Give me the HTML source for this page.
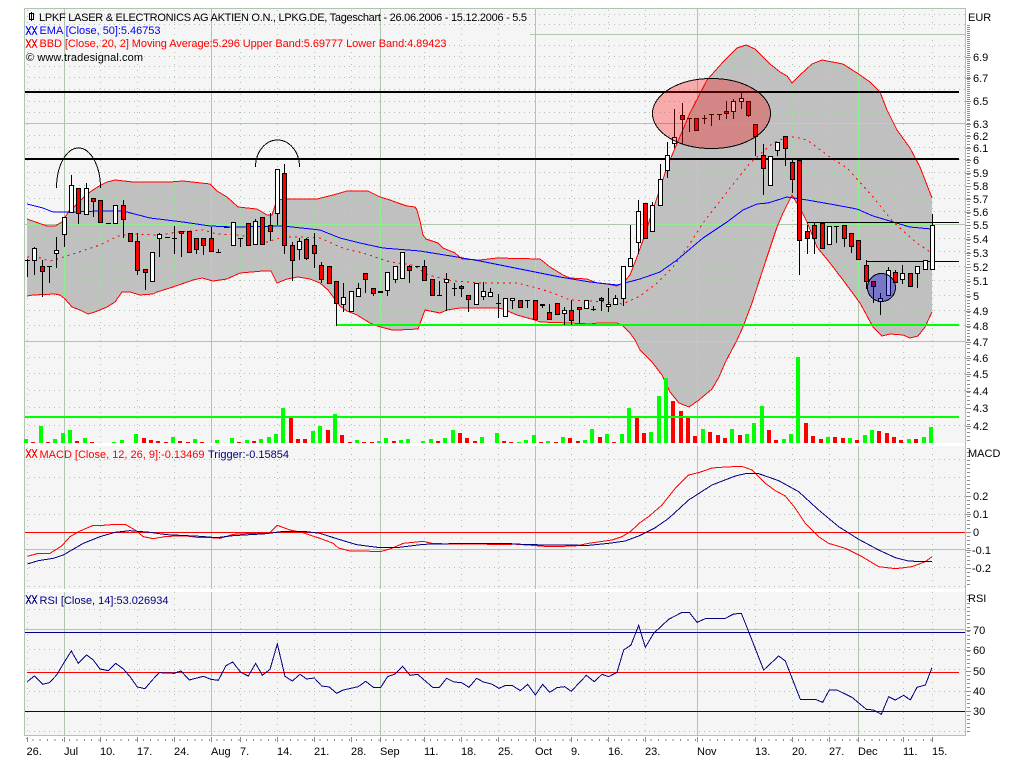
<!DOCTYPE html>
<html><head><meta charset="utf-8"><title>LPKF Chart</title>
<style>html,body{margin:0;padding:0;background:#fff}svg{display:block}
text{font-family:"Liberation Sans",Tahoma,sans-serif;font-size:11px}</style></head><body>
<svg width="1024" height="768" viewBox="0 0 1024 768" shape-rendering="crispEdges" xmlns="http://www.w3.org/2000/svg">
<defs>
<clipPath id="b"><path d="M27 219L47 226 55 226 62 222 69 211 71 210 78 203 86 195 93 190 101 185 107 182 115 180 133 182 170 182 183 181 210 184 217 191 227 197 238 207 257 209 267 215 272 215 277 200 287 199 317 199 333 195 340 193 347 191 368 191 380 197 390 200 398 203 407 206 415 207 417 210 420 221 423 235 426 239 438 243 443 248 455 253 462 259 480 260 497 258 540 259 550 267 563 275 570 278 587 279 597 283 607 284 617 286 623 283 630 275 637 257 642 243 653 210 667 167 690 113 707 80 723 62 737 48 746 45 755 49 770 64 780 72 787 76 792 83 800 75 812 64 822 60 843 64 857 73 870 82 880 92 887 110 897 130 910 148 920 167 932 198V312L925 327 918 336 910 338 903 335 890 334 882 336 873 327 860 303 843 280 830 263 817 247 807 222 802 212 792 195 783 213 777 227 767 257 752 303 743 327 737 340 725 363 719 377 712 389 699 400 689 407 679 403 670 392 662 375 652 362 640 350 635 340 630 333 623 326 617 323 598 323 590 324 570 323 540 322 535 320 517 315 503 309 497 308 488 308 477 308 460 308 447 310 440 313 425 310 418 329 398 330 392 330 377 326 370 323 357 315 347 311 340 306 328 290 320 283 310 279 298 277 287 279 277 283 271 271 263 271 240 273 227 279 213 281 202 278 193 280 173 287 157 292 153 294 140 295 130 292 122 292 115 302 107 307 95 312 88 314 80 310 72 307 65 299 60 295 55 294 33 295 27 296Z"/></clipPath>
<g id="g">
<path d="M29 14.5H965M29 24.5H965M29 45.5H965M29 56.5H965M29 66.5H965M29 77.5H965M29 89.5H965M29 101.5H965M29 112.5H965M29 135.5H965M29 147.5H965M29 159.5H965M29 172.5H965M29 185.5H965M29 198.5H965M29 211.5H965M29 238.5H965M29 251.5H965M29 266.5H965M29 280.5H965M29 295.5H965M29 310.5H965M29 325.5H965M29 357.5H965M29 373.5H965M29 390.5H965M29 407.5H965M29 425.5H965M29 459.5H965M29 477.5H965M29 496.5H965M29 514.5H965M29 567.5H965M29 586.5H965M29 609.5H965M29 649.5H965M29 669.5H965M29 691.5H965M29 731.5H965" stroke-dasharray="1 4" fill="none"/>
<path d="M27.5 10V735M100.5 10V735M137.5 10V735M174.5 10V735M240.5 10V735M277.5 10V735M314.5 10V735M351.5 10V735M424.5 10V735M461.5 10V735M498.5 10V735M571.5 10V735M608.5 10V735M645.5 10V735M755.5 10V735M792.5 10V735M829.5 10V735M903.5 10V735M932.5 10V735" stroke-dasharray="1 5" fill="none"/>
<path d="M530 34.5H965M25 123.5H965M25 224.5H965M25 341.5H965M25 549.5H965M25 629.5H965M64.5 9V735M211.5 9V735M380.5 9V735M535.5 9V735M697.5 9V735M858.5 9V735" fill="none"/>
</g>
</defs>
<rect x="25" y="9" width="940" height="726" fill="#f5f5f5"/>
<use href="#g" stroke="#afc5af"/>
<!-- band -->
<path d="M27 219L47 226 55 226 62 222 69 211 71 210 78 203 86 195 93 190 101 185 107 182 115 180 133 182 170 182 183 181 210 184 217 191 227 197 238 207 257 209 267 215 272 215 277 200 287 199 317 199 333 195 340 193 347 191 368 191 380 197 390 200 398 203 407 206 415 207 417 210 420 221 423 235 426 239 438 243 443 248 455 253 462 259 480 260 497 258 540 259 550 267 563 275 570 278 587 279 597 283 607 284 617 286 623 283 630 275 637 257 642 243 653 210 667 167 690 113 707 80 723 62 737 48 746 45 755 49 770 64 780 72 787 76 792 83 800 75 812 64 822 60 843 64 857 73 870 82 880 92 887 110 897 130 910 148 920 167 932 198V312L925 327 918 336 910 338 903 335 890 334 882 336 873 327 860 303 843 280 830 263 817 247 807 222 802 212 792 195 783 213 777 227 767 257 752 303 743 327 737 340 725 363 719 377 712 389 699 400 689 407 679 403 670 392 662 375 652 362 640 350 635 340 630 333 623 326 617 323 598 323 590 324 570 323 540 322 535 320 517 315 503 309 497 308 488 308 477 308 460 308 447 310 440 313 425 310 418 329 398 330 392 330 377 326 370 323 357 315 347 311 340 306 328 290 320 283 310 279 298 277 287 279 277 283 271 271 263 271 240 273 227 279 213 281 202 278 193 280 173 287 157 292 153 294 140 295 130 292 122 292 115 302 107 307 95 312 88 314 80 310 72 307 65 299 60 295 55 294 33 295 27 296Z" fill="#c0c0c0"/>
<g clip-path="url(#b)"><use href="#g" stroke="#90ee90"/></g>
<rect x="25" y="443" width="940" height="3" fill="#fff"/>
<rect x="25" y="589" width="940" height="3" fill="#fff"/>
<path d="M25 8.5H966M24.5 8V736M965.5 8V736M24 735.5H966" stroke="#afc5af" fill="none"/>
<!-- band lines -->
<g fill="none" stroke="#f00">
<path d="M27 219L47 226 55 226 62 222 69 211 71 210 78 203 86 195 93 190 101 185 107 182 115 180 133 182 170 182 183 181 210 184 217 191 227 197 238 207 257 209 267 215 272 215 277 200 287 199 317 199 333 195 340 193 347 191 368 191 380 197 390 200 398 203 407 206 415 207 417 210 420 221 423 235 426 239 438 243 443 248 455 253 462 259 480 260 497 258 540 259 550 267 563 275 570 278 587 279 597 283 607 284 617 286 623 283 630 275 637 257 642 243 653 210 667 167 690 113 707 80 723 62 737 48 746 45 755 49 770 64 780 72 787 76 792 83 800 75 812 64 822 60 843 64 857 73 870 82 880 92 887 110 897 130 910 148 920 167 932 198"/>
<path d="M932 312L925 327 918 336 910 338 903 335 890 334 882 336 873 327 860 303 843 280 830 263 817 247 807 222 802 212 792 195 783 213 777 227 767 257 752 303 743 327 737 340 725 363 719 377 712 389 699 400 689 407 679 403 670 392 662 375 652 362 640 350 635 340 630 333 623 326 617 323 598 323 590 324 570 323 540 322 535 320 517 315 503 309 497 308 488 308 477 308 460 308 447 310 440 313 425 310 418 329 398 330 392 330 377 326 370 323 357 315 347 311 340 306 328 290 320 283 310 279 298 277 287 279 277 283 271 271 263 271 240 273 227 279 213 281 202 278 193 280 173 287 157 292 153 294 140 295 130 292 122 292 115 302 107 307 95 312 88 314 80 310 72 307 65 299 60 295 55 294 33 295 27 296"/>
<path stroke-dasharray="2 4" d="M27 257L37 257 43 259 50 261 57 259 70 255 100 245 118 236 133 234 160 235 177 232 203 230 217 234 240 235 267 242 283 237 300 237 320 238 340 247 350 250 363 253 390 262 413 265 428 275 453 281 480 283 517 283 537 288 553 293 570 300 590 301 607 302 623 304 640 296 657 283 673 267 687 248 703 223 727 192 750 163 773 143 787 137 795 137 807 140 830 157 847 168 873 197 893 222 917 243 930 252"/>
</g>
<path fill="none" stroke="#00f" d="M27 204L43 208 53 212 70 212 100 211 123 211 150 218 183 222 210 226 233 227 283 226 320 230 340 238 360 243 383 248 420 251 457 257 480 261 520 269 560 277 590 282 617 285 640 279 660 272 677 260 703 238 727 222 743 210 757 204 768 203 787 197 807 200 830 204 857 209 873 216 893 222 910 227 931 229"/>
<!-- volume -->
<path fill="#0f0" d="M24 439h4V443h-4zM39 426h4V443h-4zM53 439h4V443h-4zM61 433h4V443h-4zM68 430h4V443h-4zM83 438h4V443h-4zM112 442h4V443h-4zM120 440h4V443h-4zM134 434h4V443h-4zM171 437h4V443h-4zM193 439h4V443h-4zM215 440h4V443h-4zM230 438h4V443h-4zM245 440h4V443h-4zM259 439h4V443h-4zM267 437h4V443h-4zM274 434h4V443h-4zM281 408h4V443h-4zM311 431h4V443h-4zM318 426h4V443h-4zM333 414h4V443h-4zM355 440h4V443h-4zM377 441h4V443h-4zM384 438h4V443h-4zM399 440h4V443h-4zM406 439h4V443h-4zM421 441h4V443h-4zM429 439h4V443h-4zM443 438h4V443h-4zM451 430h4V443h-4zM480 437h4V443h-4zM495 433h4V443h-4zM517 442h4V443h-4zM524 440h4V443h-4zM532 435h4V443h-4zM546 441h4V443h-4zM561 437h4V443h-4zM583 440h4V443h-4zM590 429h4V443h-4zM605 434h4V443h-4zM620 434h4V443h-4zM627 408h4V443h-4zM649 432h4V443h-4zM657 396h4V443h-4zM664 378h4V443h-4zM701 429h4V443h-4zM730 429h4V443h-4zM745 434h4V443h-4zM752 423h4V443h-4zM760 406h4V443h-4zM782 439h4V443h-4zM789 434h4V443h-4zM796 357h4V443h-4zM826 437h4V443h-4zM848 438h4V443h-4zM863 435h4V443h-4zM870 430h4V443h-4zM907 439h4V443h-4zM922 437h4V443h-4zM929 427h4V443h-4z"/>
<path fill="#f00" d="M31 442h4V443h-4zM46 442h4V443h-4zM75 441h4V443h-4zM90 442h4V443h-4zM142 438h4V443h-4zM149 440h4V443h-4zM156 441h4V443h-4zM164 442h4V443h-4zM178 441h4V443h-4zM186 442h4V443h-4zM200 442h4V443h-4zM237 442h4V443h-4zM252 441h4V443h-4zM289 418h4V443h-4zM296 439h4V443h-4zM303 439h4V443h-4zM326 430h4V443h-4zM340 435h4V443h-4zM348 442h4V443h-4zM362 442h4V443h-4zM370 442h4V443h-4zM392 441h4V443h-4zM436 441h4V443h-4zM458 433h4V443h-4zM465 438h4V443h-4zM473 441h4V443h-4zM502 441h4V443h-4zM509 442h4V443h-4zM539 442h4V443h-4zM554 442h4V443h-4zM568 438h4V443h-4zM576 441h4V443h-4zM598 437h4V443h-4zM612 442h4V443h-4zM635 418h4V443h-4zM642 433h4V443h-4zM671 401h4V443h-4zM679 411h4V443h-4zM686 418h4V443h-4zM693 436h4V443h-4zM708 432h4V443h-4zM716 435h4V443h-4zM723 438h4V443h-4zM738 435h4V443h-4zM767 430h4V443h-4zM774 440h4V443h-4zM804 423h4V443h-4zM811 436h4V443h-4zM819 439h4V443h-4zM833 437h4V443h-4zM841 438h4V443h-4zM855 440h4V443h-4zM877 431h4V443h-4zM885 433h4V443h-4zM892 437h4V443h-4zM899 440h4V443h-4zM914 439h4V443h-4z"/>
<!-- horizontal studies -->
<rect x="25" y="91" width="934" height="2" fill="#000"/>
<rect x="25" y="158" width="934" height="2" fill="#000"/>
<rect x="807" y="222" width="152" height="1" fill="#000"/>
<rect x="866" y="261" width="93" height="1" fill="#000"/>
<rect x="336" y="324" width="623" height="2" fill="#0f0"/>
<rect x="25" y="416" width="934" height="2" fill="#0f0"/>
<!-- candle wicks -->
<path fill="none" stroke="#000" d="M27.5 259V277M34.5 247V275M42.5 260V297M49.5 266V283M56.5 237V268M64.5 217V247M71.5 175V213M78.5 188V224M86.5 183V215M93.5 198V217M123.5 200V238M137.5 233V275M145.5 269V290M159.5 233V257M174.5 226V254M181.5 231V257M196.5 238V254M203.5 238V255M211.5 227V252M218.5 249V253M240.5 238V247M255.5 219V245M270.5 213V241M277.5 169V225M284.5 164V254M292.5 242V281M299.5 238V260M306.5 238V260M314.5 233V268M321.5 262V283M336.5 281V326M343.5 283V312M358.5 283V297M365.5 273V293M373.5 288V296M387.5 272V296M395.5 266V283M409.5 265V283M424.5 260V281M439.5 281V296M446.5 273V311M454.5 283V296M461.5 285V297M468.5 295V312M483.5 282V300M490.5 288V297M498.5 294V318M512.5 298V309M527.5 300V308M542.5 304V308M549.5 304V320M564.5 307V325M571.5 300V325M579.5 307V323M593.5 306V311M601.5 297V311M608.5 288V312M615.5 295V305M623.5 266V306M630.5 225V259M638.5 200V254M652.5 202V232M660.5 164V206M667.5 142V178M674.5 109V148M682.5 103V144M689.5 118V132M704.5 115V124M711.5 114V126M719.5 114V120M726.5 101V119M733.5 99V119M741.5 93V109M748.5 101V117M755.5 124V156M763.5 144V195M777.5 142V156M785.5 136V166M792.5 160V193M799.5 160V275M807.5 225V254M814.5 223V254M836.5 226V243M844.5 225V247M851.5 233V253M866.5 260V289M873.5 281V303M880.5 293V315M888.5 267V296M895.5 270V283M902.5 265V284M917.5 266V288M932.5 214V270"/>
<!-- doji -->
<path fill="none" stroke="#000" d="M25 260.5h5M47 266.5h5M106 223.5h5M165 237.5h5M172 238.5h5M216 252.5h5M224 227.5h5M238 238.5h5M415 266.5h5M378 291.5h5M378 292.5h5M437 295.5h5M452 288.5h5M496 303.5h5M525 300.5h5M540 304.5h5M540 305.5h5M591 309.5h5M687 118.5h5M702 118.5h5M709 114.5h5M717 114.5h5M834 226.5h5"/>
<!-- red bodies -->
<path fill="#f00" stroke="#000" d="M40.5 266.5h4V271.5h-4zM76.5 188.5h4V213.5h-4zM91.5 198.5h4V201.5h-4zM98.5 200.5h4V222.5h-4zM121.5 205.5h4V219.5h-4zM128.5 233.5h4V241.5h-4zM135.5 241.5h4V270.5h-4zM143.5 269.5h4V272.5h-4zM179.5 231.5h4V233.5h-4zM187.5 231.5h4V252.5h-4zM194.5 238.5h4V249.5h-4zM201.5 238.5h4V245.5h-4zM209.5 238.5h4V251.5h-4zM246.5 223.5h4V245.5h-4zM260.5 217.5h4V244.5h-4zM268.5 225.5h4V231.5h-4zM282.5 173.5h4V245.5h-4zM290.5 245.5h4V260.5h-4zM304.5 239.5h4V258.5h-4zM312.5 245.5h4V253.5h-4zM319.5 265.5h4V279.5h-4zM327.5 266.5h4V283.5h-4zM334.5 281.5h4V303.5h-4zM363.5 273.5h4V279.5h-4zM371.5 288.5h4V293.5h-4zM407.5 266.5h4V270.5h-4zM422.5 266.5h4V280.5h-4zM430.5 279.5h4V295.5h-4zM459.5 286.5h4V288.5h-4zM466.5 295.5h4V299.5h-4zM518.5 300.5h4V307.5h-4zM533.5 300.5h4V319.5h-4zM547.5 312.5h4V319.5h-4zM555.5 303.5h4V314.5h-4zM569.5 310.5h4V320.5h-4zM577.5 307.5h4V309.5h-4zM599.5 298.5h4V300.5h-4zM643.5 203.5h4V238.5h-4zM680.5 115.5h4V119.5h-4zM694.5 118.5h4V130.5h-4zM724.5 111.5h4V113.5h-4zM746.5 101.5h4V115.5h-4zM753.5 124.5h4V136.5h-4zM761.5 155.5h4V168.5h-4zM783.5 136.5h4V148.5h-4zM790.5 162.5h4V179.5h-4zM797.5 160.5h4V240.5h-4zM805.5 231.5h4V238.5h-4zM812.5 225.5h4V238.5h-4zM820.5 223.5h4V248.5h-4zM842.5 225.5h4V238.5h-4zM849.5 233.5h4V246.5h-4zM856.5 240.5h4V259.5h-4zM864.5 265.5h4V281.5h-4zM871.5 281.5h4V286.5h-4zM893.5 272.5h4V282.5h-4zM908.5 273.5h4V286.5h-4z"/>
<!-- white bodies -->
<path fill="#fff" stroke="#000" d="M32.5 248.5h4V260.5h-4zM54.5 250.5h4V253.5h-4zM62.5 217.5h4V234.5h-4zM69.5 185.5h4V212.5h-4zM84.5 188.5h4V214.5h-4zM113.5 205.5h4V223.5h-4zM150.5 252.5h4V281.5h-4zM157.5 234.5h4V238.5h-4zM231.5 222.5h4V245.5h-4zM253.5 221.5h4V244.5h-4zM275.5 169.5h4V213.5h-4zM297.5 241.5h4V249.5h-4zM341.5 297.5h4V304.5h-4zM349.5 291.5h4V311.5h-4zM356.5 288.5h4V296.5h-4zM385.5 272.5h4V290.5h-4zM393.5 266.5h4V279.5h-4zM400.5 252.5h4V278.5h-4zM444.5 279.5h4V282.5h-4zM474.5 283.5h4V304.5h-4zM481.5 291.5h4V296.5h-4zM488.5 292.5h4V296.5h-4zM503.5 298.5h4V316.5h-4zM510.5 298.5h4V300.5h-4zM562.5 310.5h4V313.5h-4zM584.5 300.5h4V308.5h-4zM606.5 304.5h4V306.5h-4zM613.5 298.5h4V304.5h-4zM621.5 266.5h4V298.5h-4zM628.5 258.5h4V266.5h-4zM636.5 211.5h4V242.5h-4zM650.5 205.5h4V231.5h-4zM658.5 179.5h4V205.5h-4zM665.5 155.5h4V170.5h-4zM672.5 137.5h4V143.5h-4zM731.5 101.5h4V111.5h-4zM739.5 98.5h4V101.5h-4zM768.5 156.5h4V185.5h-4zM775.5 142.5h4V150.5h-4zM827.5 226.5h4V244.5h-4zM878.5 298.5h4V301.5h-4zM886.5 270.5h4V295.5h-4zM900.5 273.5h4V279.5h-4zM915.5 266.5h4V273.5h-4zM923.5 260.5h4V269.5h-4zM930.5 225.5h4V269.5h-4z"/>
<!-- annotations -->
<ellipse cx="711.5" cy="113.5" rx="59" ry="35" fill="#f00" fill-opacity=".3" stroke="#000"/>
<circle cx="881.5" cy="287.5" r="14" fill="#0000c8" fill-opacity=".38" stroke="#000"/>
<path fill="none" stroke="#000" d="M56.5 188A22 40 0 0 1 100.5 188M255.5 167A22 27 0 0 1 299.5 167"/>
<!-- MACD -->
<path fill="none" stroke="#f00" d="M25 532.5H965M27 672.5H959"/>
<path fill="none" stroke="#000080" d="M25 632.5H965M25 711.5H965"/>
<g fill="none" transform="translate(0 440) scale(.33333)">
<polyline vector-effect="non-scaling-stroke" stroke="#f00" points="82,349 115,340 150,340 185,318 210,290 240,273 280,256 310,256 345,253 375,253 405,270 430,290 460,296 500,289 560,288 590,292 635,293 660,295 700,283 740,281 810,278 832,256 870,270 905,277 960,295 1000,310 1015,324 1050,333 1090,333 1140,335 1170,327 1210,310 1270,304 1300,311 1400,312 1480,313 1536,314"/>
<polyline vector-effect="non-scaling-stroke" stroke="#000080" points="82,372 115,362 160,355 190,345 250,310 300,290 345,277 390,272 450,277 500,284 600,289 650,293 700,287 800,281 850,274 910,274 960,280 1010,296 1070,314 1140,323 1190,323 1270,313 1400,310 1536,310"/>
<polyline vector-effect="non-scaling-stroke" stroke="#000080" points="82,725 103,708 128,733 148,728 170,705 192,668 214,633 235,670 260,645 280,660 300,687 325,692 347,670 370,687 390,710 412,741 435,746 457,720 478,698 522,700 543,693 568,720 610,709 633,718 655,721 678,677 698,666 722,697 745,708 767,670 787,706 810,688 832,612 855,709 877,723 900,703 920,717 943,714 965,738 988,741 1010,760 1030,750 1075,740 1097,724 1120,742 1142,742 1163,710 1185,702 1208,679 1230,706 1253,703 1298,742 1318,742 1340,715 1362,726 1385,728 1407,742 1430,715 1450,726 1475,732 1497,745 1515,737 1536,736"/>
</g>
<g fill="none" transform="translate(512 340) scale(.33333)">
<polyline vector-effect="non-scaling-stroke" stroke="#f00" points="0,612 60,616 110,620 190,618 230,610 300,600 330,590 355,575 385,547 410,530 450,495 490,445 530,405 560,398 600,384 640,381 690,379 720,390 760,430 790,452 820,468 850,505 880,550 920,590 950,610 1000,625 1050,650 1100,680 1150,686 1200,680 1240,665 1260,650"/>
<polyline vector-effect="non-scaling-stroke" stroke="#000080" points="0,612 100,615 230,616 290,610 340,603 380,588 430,563 470,535 530,480 600,435 670,408 700,401 740,401 800,422 860,455 920,510 980,560 1040,598 1100,630 1150,653 1190,663 1230,665 1260,664"/>
<polyline vector-effect="non-scaling-stroke" stroke="#000080" points="0,1036 25,1052 47,1033 70,1065 92,1033 113,1057 135,1043 158,1040 178,1054 200,1030 223,1006 247,1025 270,1003 290,1010 315,997 335,930 357,915 380,856 400,922 425,880 470,838 510,817 532,817 555,847 580,836 640,835 665,822 688,820 710,875 755,990 800,948 820,963 865,1078 910,1078 932,1087 952,1050 975,1050 1020,1072 1063,1108 1085,1110 1108,1123 1130,1070 1150,1080 1175,1066 1195,1080 1215,1042 1240,1035 1260,983"/>
</g>
<!-- axis ticks -->
<g fill="none" stroke="#8a8a8a">
<path stroke-width="3" stroke-dasharray="1 1" d="M968.5 25V120"/>
<path stroke-width="3" stroke-dasharray="1 2" d="M968.5 120V340"/>
<path stroke-width="3" stroke-dasharray="1 3" d="M968.5 340V441M968.5 448V588M968.5 595V735"/>
<path d="M966 57.5h5M966 78.5h5M966 101.5h5M966 124.5h5M966 136.5h5M966 148.5h5M966 160.5h5M966 173.5h5M966 186.5h5M966 199.5h5M966 212.5h5M966 225.5h5M966 239.5h5M966 253.5h5M966 267.5h5M966 281.5h5M966 296.5h5M966 311.5h5M966 326.5h5M966 342.5h5M966 358.5h5M966 374.5h5M966 391.5h5M966 408.5h5M966 426.5h5M966 496.5h5M966 514.5h5M966 532.5h5M966 550.5h5M966 568.5h5M966 630.5h5M966 650.5h5M966 671.5h5M966 691.5h5M966 711.5h5"/>
<path stroke-width="2" stroke-dasharray="1 6.36" d="M27 738V740H933"/>
<path d="M27.5 737V742M64.5 737V742M100.5 737V742M137.5 737V742M174.5 737V742M211.5 737V742M240.5 737V742M277.5 737V742M314.5 737V742M351.5 737V742M380.5 737V742M424.5 737V742M461.5 737V742M498.5 737V742M535.5 737V742M571.5 737V742M608.5 737V742M645.5 737V742M697.5 737V742M755.5 737V742M792.5 737V742M829.5 737V742M858.5 737V742M903.5 737V742M932.5 737V742"/>
</g>
<!-- legend icons -->
<path fill="none" stroke="#000" d="M31.5 12V21M29.5 13.5h4V19.5h-4z"/>
<path fill="none" stroke="#00f" d="M26 26L31 35M31 26L26 35M32 26L37 35M37 26L32 35"/>
<path fill="none" stroke="#f00" d="M26 39L31 48M31 39L26 48M32 39L37 48M37 39L32 48M26 449L31 458M31 449L26 458M32 449L37 458M37 449L32 458"/>
<path fill="none" stroke="#000080" d="M26 595L31 604M31 595L26 604M32 595L37 604M37 595L32 604"/>
<!-- text -->
<text x="39" y="21" textLength="488" lengthAdjust="spacing">LPKF LASER &amp; ELECTRONICS AG AKTIEN O.N., LPKG.DE, Tageschart - 26.06.2006 - 15.12.2006 - 5.5</text>
<text x="39.5" y="34" fill="#00f" textLength="121" lengthAdjust="spacing">EMA [Close, 50]:5.46753</text>
<text x="39.5" y="47" fill="#f00" textLength="407" lengthAdjust="spacing">BBD [Close, 20, 2] Moving Average:5.296 Upper Band:5.69777 Lower Band:4.89423</text>
<text x="26" y="61" textLength="117" lengthAdjust="spacing">© www.tradesignal.com</text>
<text x="39.5" y="458" fill="#f00" textLength="165" lengthAdjust="spacing">MACD [Close, 12, 26, 9]:-0.13469</text>
<text x="208" y="458" fill="#000080" textLength="81" lengthAdjust="spacing">Trigger:-0.15854</text>
<text x="39.5" y="604" fill="#000080" textLength="129" lengthAdjust="spacing">RSI [Close, 14]:53.026934</text>
<text x="968" y="21">EUR</text><text x="968" y="457">MACD</text><text x="968" y="602">RSI</text>
<text x="973" y="61">6.9</text><text x="973" y="82">6.7</text><text x="973" y="105">6.5</text><text x="973" y="128">6.3</text><text x="973" y="140">6.2</text><text x="973" y="152">6.1</text><text x="973" y="164">6</text><text x="973" y="177">5.9</text><text x="973" y="190">5.8</text><text x="973" y="203">5.7</text><text x="973" y="216">5.6</text><text x="973" y="229">5.5</text><text x="973" y="243">5.4</text><text x="973" y="257">5.3</text><text x="973" y="271">5.2</text><text x="973" y="285">5.1</text><text x="973" y="300">5</text><text x="973" y="315">4.9</text><text x="973" y="330">4.8</text><text x="973" y="346">4.7</text><text x="973" y="362">4.6</text><text x="973" y="378">4.5</text><text x="973" y="395">4.4</text><text x="973" y="412">4.3</text><text x="973" y="430">4.2</text>
<text x="973" y="500">0.2</text><text x="973" y="518">0.1</text><text x="973" y="536">0</text><text x="972" y="554">-0.1</text><text x="972" y="572">-0.2</text>
<text x="973" y="634">70</text><text x="973" y="654">60</text><text x="973" y="675">50</text><text x="973" y="695">40</text><text x="973" y="715">30</text>
<text x="26.5" y="755">26.</text><text x="64" y="755">Jul</text><text x="100" y="755">10.</text><text x="137" y="755">17.</text><text x="174" y="755">24.</text><text x="211" y="755">Aug</text><text x="240" y="755">7.</text><text x="277" y="755">14.</text><text x="314" y="755">21.</text><text x="351" y="755">28.</text><text x="380" y="755">Sep</text><text x="424" y="755">11.</text><text x="461" y="755">18.</text><text x="498" y="755">25.</text><text x="535" y="755">Oct</text><text x="571" y="755">9.</text><text x="608" y="755">16.</text><text x="645" y="755">23.</text><text x="697" y="755">Nov</text><text x="755" y="755">13.</text><text x="792" y="755">20.</text><text x="829" y="755">27.</text><text x="858" y="755">Dec</text><text x="903" y="755">11.</text><text x="932" y="755">15.</text>
</svg>
</body></html>
